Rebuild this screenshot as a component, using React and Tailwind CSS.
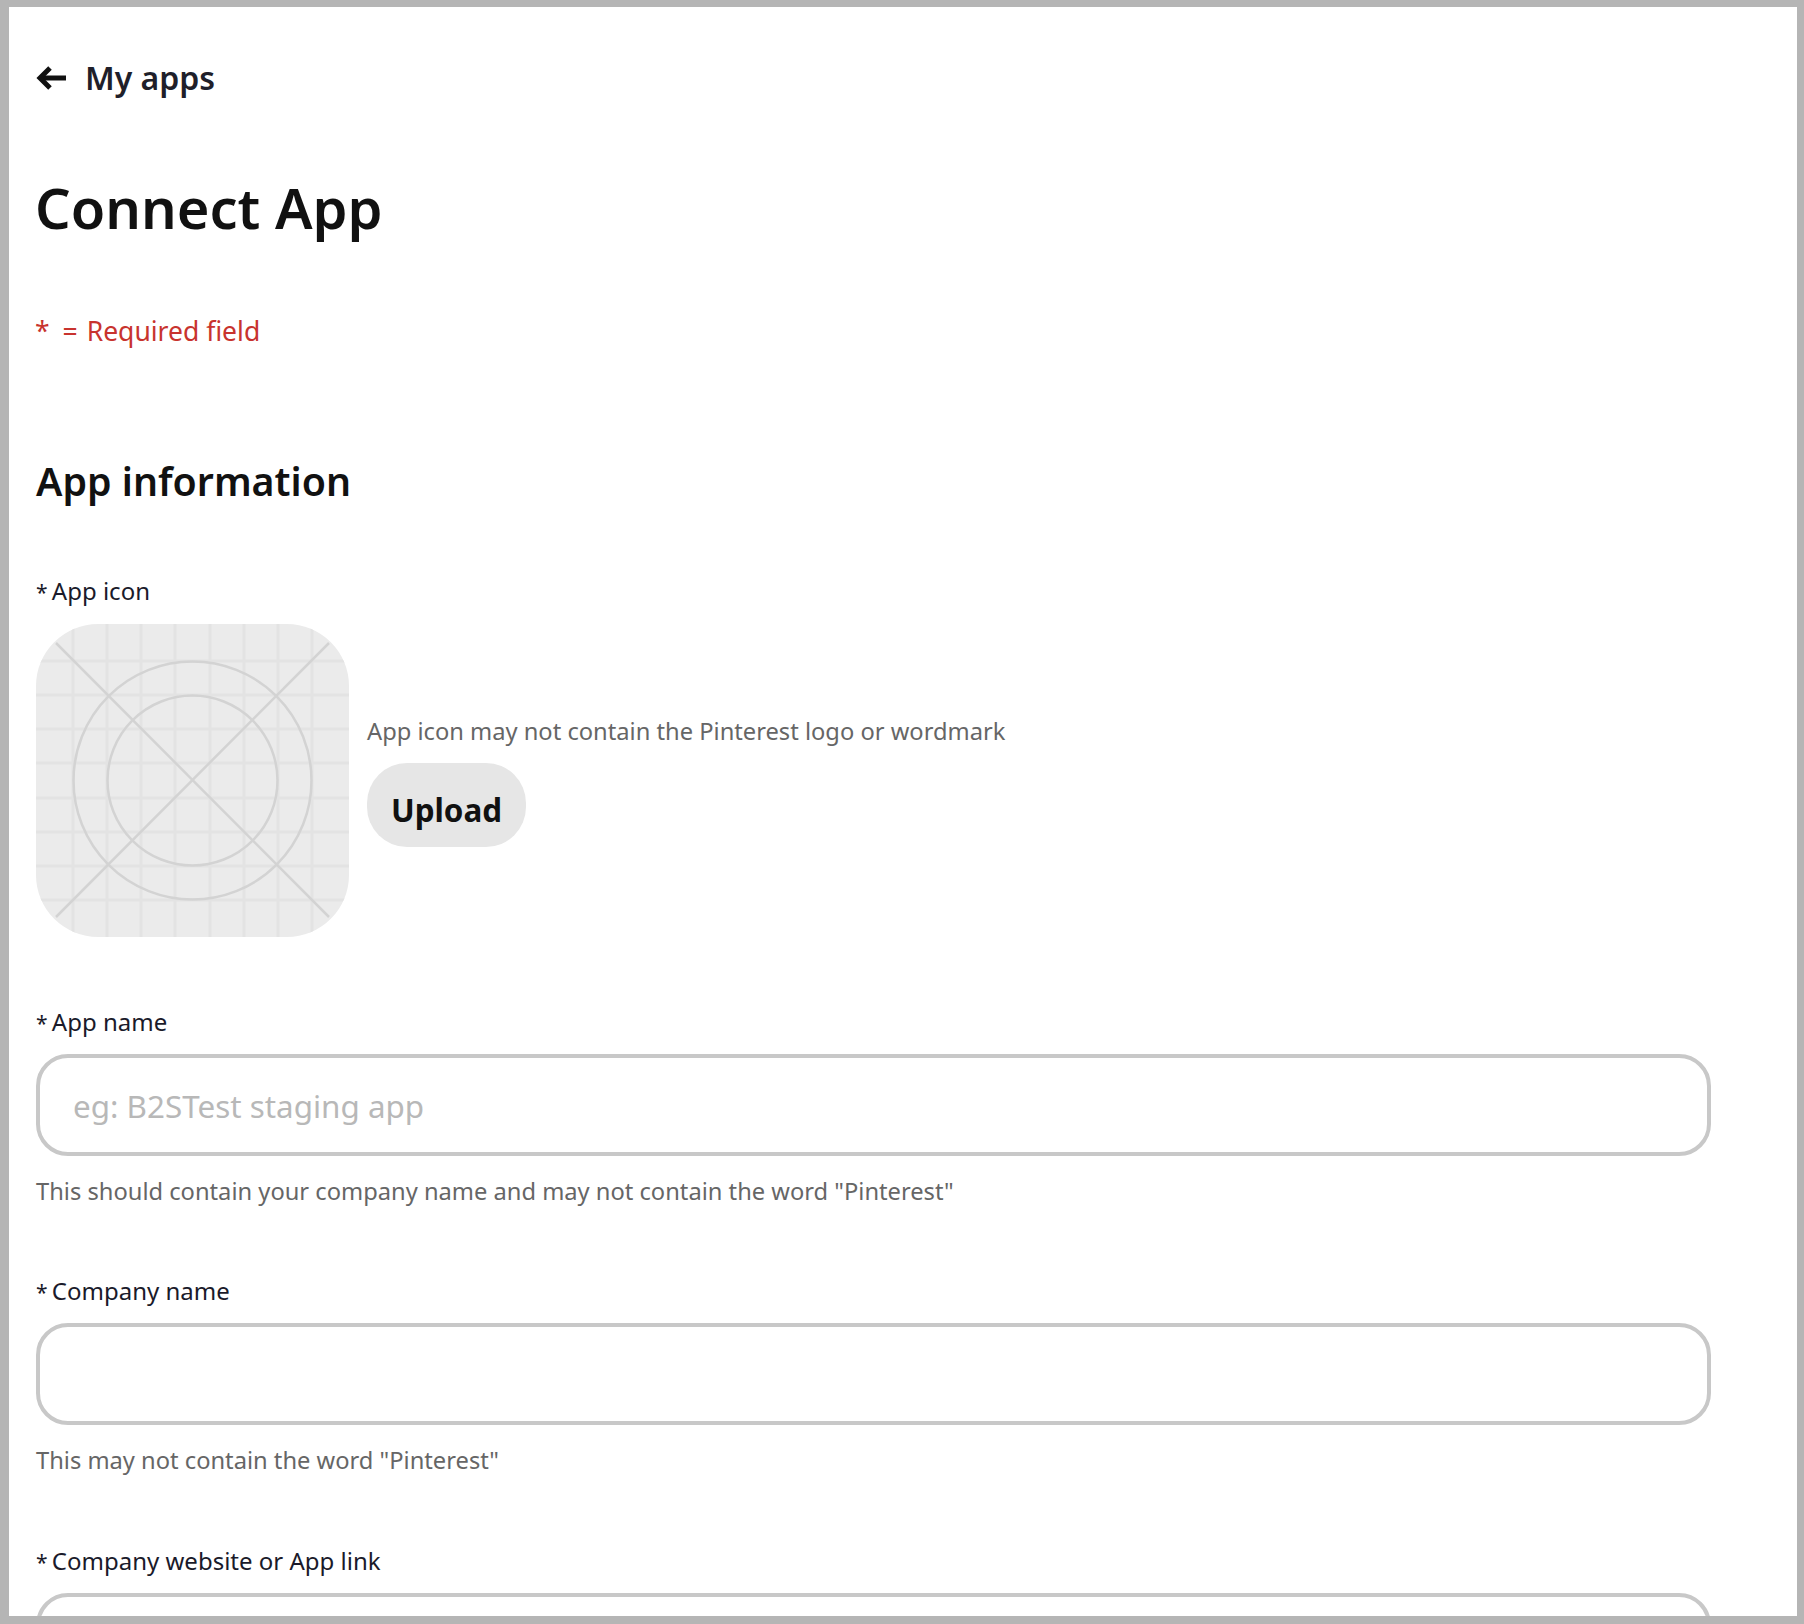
const FONT = "font-['Noto_Sans',sans-serif]";

function BackArrow() {
  return (
    <svg width="32" height="26" viewBox="0 0 32 26" fill="none" stroke="#111111" strokeWidth="5" className="shrink-0">
      <path d="M30 13H6" />
      <path d="M14 3L4 13l10 10" />
    </svg>
  );
}

function IconPlaceholder() {
  const lines = [37, 71, 105, 139, 174, 208, 242, 276];
  return (
    <svg width="313" height="313" viewBox="0 0 313 313" className="shrink-0">
      <defs>
        <clipPath id="ic">
          <rect width="313" height="313" rx="62" />
        </clipPath>
      </defs>
      <g clipPath="url(#ic)">
        <rect width="313" height="313" fill="#ebebeb" />
        {lines.map((p) => (
          <g key={p} stroke="#e3e3e3" strokeWidth="3">
            <line x1={p} y1="0" x2={p} y2="313" />
            <line x1="0" y1={p} x2="313" y2={p} />
          </g>
        ))}
      </g>
      <g stroke="#d3d3d3" strokeWidth="2.5" fill="none">
        <line x1="20" y1="19" x2="293" y2="293" />
        <line x1="293" y1="19" x2="20" y2="293" />
        <circle cx="156.5" cy="156.5" r="119" />
        <circle cx="156.5" cy="156.5" r="85" />
      </g>
    </svg>
  );
}

function Label({ text, className }) {
  return (
    <div className={`text-[24px] leading-[32px] text-[#1a1a2a] ${className || ""}`}>
      <span className="mr-[-2px] text-[21px]">*</span> {text}
    </div>
  );
}

function Field({ label, hint, placeholder, gapClass }) {
  return (
    <div className={gapClass}>
      <Label text={label} />
      <input
        readOnly
        placeholder={placeholder}
        className="mt-[15px] block h-[102px] w-[1675px] rounded-[32px] border-[4px] border-[#c8c8c8] bg-white pl-[33px] text-[31.4px] text-[#111111] outline-none placeholder:text-[#b8b8b8]"
      />
      {hint && <div className="mt-[19px] text-[23.7px] leading-[32px] text-[#666666]">{hint}</div>}
    </div>
  );
}

export default function App() {
  return (
    <div className={`${FONT} h-[1624px] overflow-hidden bg-[#b5b5b5] pt-[7px] pr-[7px] pb-[8px] pl-[9px]`}>
      <div className="h-full overflow-hidden bg-white pl-[27px]">
        <div className="flex items-center gap-[17px] pt-[41px] text-[32px] leading-[60px] font-semibold text-[#1f1f2a]">
          <BackArrow />
          <span>My apps</span>
        </div>
        <h1 className="mt-[59px] ml-[-1px] text-[56px] leading-[80px] font-semibold text-[#111111]">Connect App</h1>
        <p className="mt-[64px] ml-[-1px] text-[26.5px] leading-[40px] text-[#c8332e]">
          <span className="mr-[13px]">*</span>
          <span className="mr-[2px]">=</span> Required field
        </p>
        <h2 className="mt-[102px] text-[39.3px] leading-[56px] font-semibold text-[#111111]">App information</h2>
        <Label text="App icon" className="mt-[66px]" />
        <div className="mt-[16px] flex items-center gap-[18px]">
          <IconPlaceholder />
          <div className="pt-[1px]">
            <div className="text-[23.7px] leading-[32px] text-[#666666]">App icon may not contain the Pinterest logo or wordmark</div>
            <button className="mt-[16px] block h-[84px] w-[159px] rounded-[40px] bg-[#e6e6e6] pt-[10px] text-[31.4px] font-bold text-[#111111]">Upload</button>
          </div>
        </div>
        <Field gapClass="mt-[69px]" label="App name" placeholder="eg: B2STest staging app" hint={'This should contain your company name and may not contain the word "Pinterest"'} />
        <Field gapClass="mt-[68px]" label="Company name" hint={'This may not contain the word "Pinterest"'} />
        <Field gapClass="mt-[69px]" label="Company website or App link" />
      </div>
    </div>
  );
}
